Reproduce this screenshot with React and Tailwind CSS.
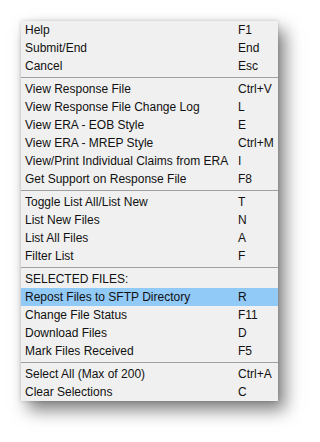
import React from "react";

const groups = [
  [
    ["Help", "F1"],
    ["Submit/End", "End"],
    ["Cancel", "Esc"],
  ],
  [
    ["View Response File", "Ctrl+V"],
    ["View Response File Change Log", "L"],
    ["View ERA - EOB Style", "E"],
    ["View ERA - MREP Style", "Ctrl+M"],
    ["View/Print Individual Claims from ERA", "I"],
    ["Get Support on Response File", "F8"],
  ],
  [
    ["Toggle List All/List New", "T"],
    ["List New Files", "N"],
    ["List All Files", "A"],
    ["Filter List", "F"],
  ],
  [
    ["SELECTED FILES:", ""],
    ["Repost Files to SFTP Directory", "R", true],
    ["Change File Status", "F11"],
    ["Download Files", "D"],
    ["Mark Files Received", "F5"],
  ],
  [
    ["Select All (Max of 200)", "Ctrl+A"],
    ["Clear Selections", "C"],
  ],
];

export default function App() {
  return (
    <div className="w-[320px] h-[442px] bg-white pt-[21px] pl-[21px]">
      <div
        className="w-[257px] bg-[#f0f0f0] text-[#111] text-[12px] leading-none shadow-[7px_9px_16px_rgba(0,0,0,0.5),0_0_4px_rgba(0,0,0,0.18)]"
        style={{ fontFamily: '"Liberation Sans", Arial, sans-serif' }}
      >
        {groups.map((g, gi) => (
          <div key={gi}>
            {gi > 0 && (
              <div className="h-[5px] pt-[2px]">
                <div className="h-px bg-[#a0a0a0]" />
              </div>
            )}
            {g.map(([label, key, hl]) => (
              <div
                key={label}
                className={
                  "grid grid-cols-[213px_1fr] items-center h-[18px] pl-[4px] " +
                  (hl ? "bg-[#91c9f7]" : "")
                }
              >
                <span className="whitespace-nowrap">{label}</span>
                <span className="whitespace-nowrap">{key}</span>
              </div>
            ))}
          </div>
        ))}
      </div>
    </div>
  );
}
